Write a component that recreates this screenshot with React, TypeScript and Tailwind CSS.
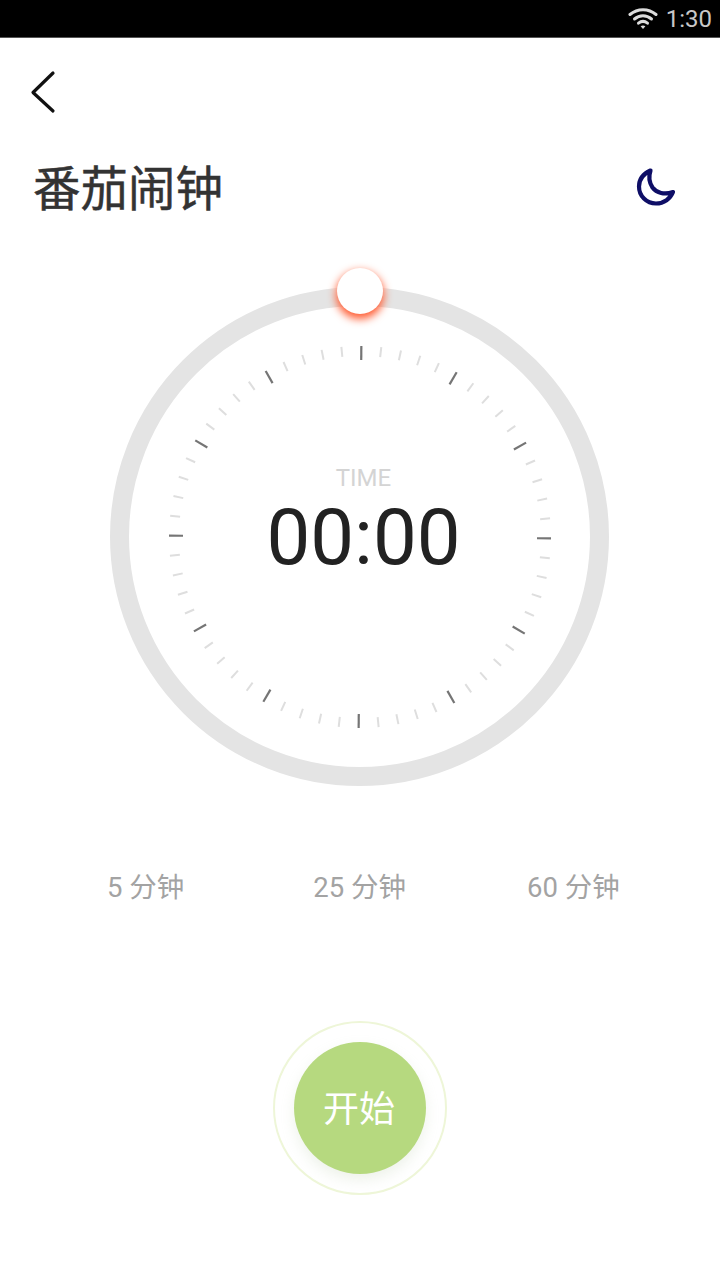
import React from "react";

const cjk = "font-['Roboto','Noto_Sans_CJK_SC',sans-serif]";

function Ticks() {
  const ticks = Array.from({ length: 60 }, (_, i) => i);
  return (
    <svg width="400" height="400" viewBox="-200 -200 400 400" className="block">
      {ticks.map((i) => {
        const major = i % 5 === 0;
        const a = ((i * 6 + 0.4) * Math.PI) / 180;
        const r1 = 191;
        const r2 = major ? 177 : 181;
        const s = Math.sin(a);
        const c = -Math.cos(a);
        return (
          <line
            key={i}
            x1={s * r1}
            y1={c * r1}
            x2={s * r2}
            y2={c * r2}
            stroke={major ? "#757575" : "#dedede"}
            strokeWidth={major ? 2.2 : 2}
          />
        );
      })}
    </svg>
  );
}

export default function App() {
  return (
    <div className={`w-[720px] h-[1280px] bg-white flex flex-col overflow-hidden ${cjk}`}>
      <div className="h-[38px] shrink-0 bg-black flex items-center justify-end pr-[8px] gap-[8px] border-b border-[#555]">
        <svg width="30" height="24" viewBox="0 0 30 24" fill="none" stroke="#dcdcdc" strokeWidth="3" strokeLinecap="round">
          <path d="M2 7.5C9.5 1 20.5 1 28 7.5" />
          <path d="M6.5 12C11.5 7.8 18.5 7.8 23.5 12" />
          <path d="M10.5 16.2C13.2 14 16.8 14 19.5 16.2" />
          <path d="M15 22L12.6 19.2C14 18.2 16 18.2 17.4 19.2Z" fill="#dcdcdc" stroke="none" />
        </svg>
        <span className="text-[24px] leading-none text-[#c8c8c8] font-['Roboto']">1:30</span>
      </div>

      <div className="h-[108px] shrink-0 pl-[29px] flex items-center">
        <svg width="28" height="44" viewBox="0 0 28 44" fill="none" stroke="#111111" strokeWidth="3.2" strokeLinecap="round" strokeLinejoin="round" className="mt-[-1px]">
          <path d="M24 3L4 22.5L24 41" />
        </svg>
      </div>

      <div className="h-[88px] shrink-0 flex items-center justify-between pl-[33px] pr-[42px]">
        <h1 className="text-[47.5px] leading-[64px] font-normal text-[#333333] [-webkit-text-stroke:0.5px_#333333]">番茄闹钟</h1>
        <svg width="42" height="42" viewBox="0 0 42 42" fill="none" stroke="#0e0e66" strokeWidth="4.2" strokeLinejoin="round" className="mb-[5px]">
          <path d="M14.5 3.5C8 6.5 3 11.5 3 19.5C3 29 10.5 36.5 20 36.5C28 36.5 34.5 31.5 37 25C28.5 28 20.5 26 16.5 20.5C13.5 16 12.5 9.5 14.5 3.5Z" />
        </svg>
      </div>

      <div className="shrink-0 ml-[110px] mt-[53px] relative w-[499px] h-[499px] rounded-full border-[19px] border-[#e4e4e4] flex items-center justify-center">
        <div className="absolute left-1/2 top-[-19px] ml-[-23px] mt-[-19px] w-[46px] h-[46px] rounded-full bg-white shadow-[0_4px_8px_1px_#ff5a30,0_-6px_8px_#ffffff]" />
        <div className="absolute top-[30.5px] left-[30.5px]">
          <Ticks />
        </div>
        <div className="relative flex flex-col items-center mt-[-36px]">
          <span className="text-[24px] leading-[28px] text-[#d4d4d4] font-['Roboto'] ml-[8px]">TIME</span>
          <span className="mt-[10px] text-[78px] leading-[72px] text-[#222222] font-['Roboto'] font-normal ml-[8px]">00:00</span>
        </div>
      </div>

      <div className="shrink-0 mt-[84px] pl-[107px] flex text-[27.5px] leading-[36px] text-[#a3a3a3]">
        <span>5 分钟</span>
        <span className="ml-[129px]">25 分钟</span>
        <span className="ml-[121px]">60 分钟</span>
      </div>

      <div className="shrink-0 mt-[115px] ml-[273px] w-[174px] h-[174px] rounded-full border-2 border-[#eef6d8] flex items-center justify-center">
        <button className="w-[132px] h-[132px] rounded-full bg-[#b6d97f] text-white text-[36px] pt-[3px] pr-[2px] shadow-[0_6px_14px_rgba(170,190,150,0.2)]">
          开始
        </button>
      </div>
    </div>
  );
}
